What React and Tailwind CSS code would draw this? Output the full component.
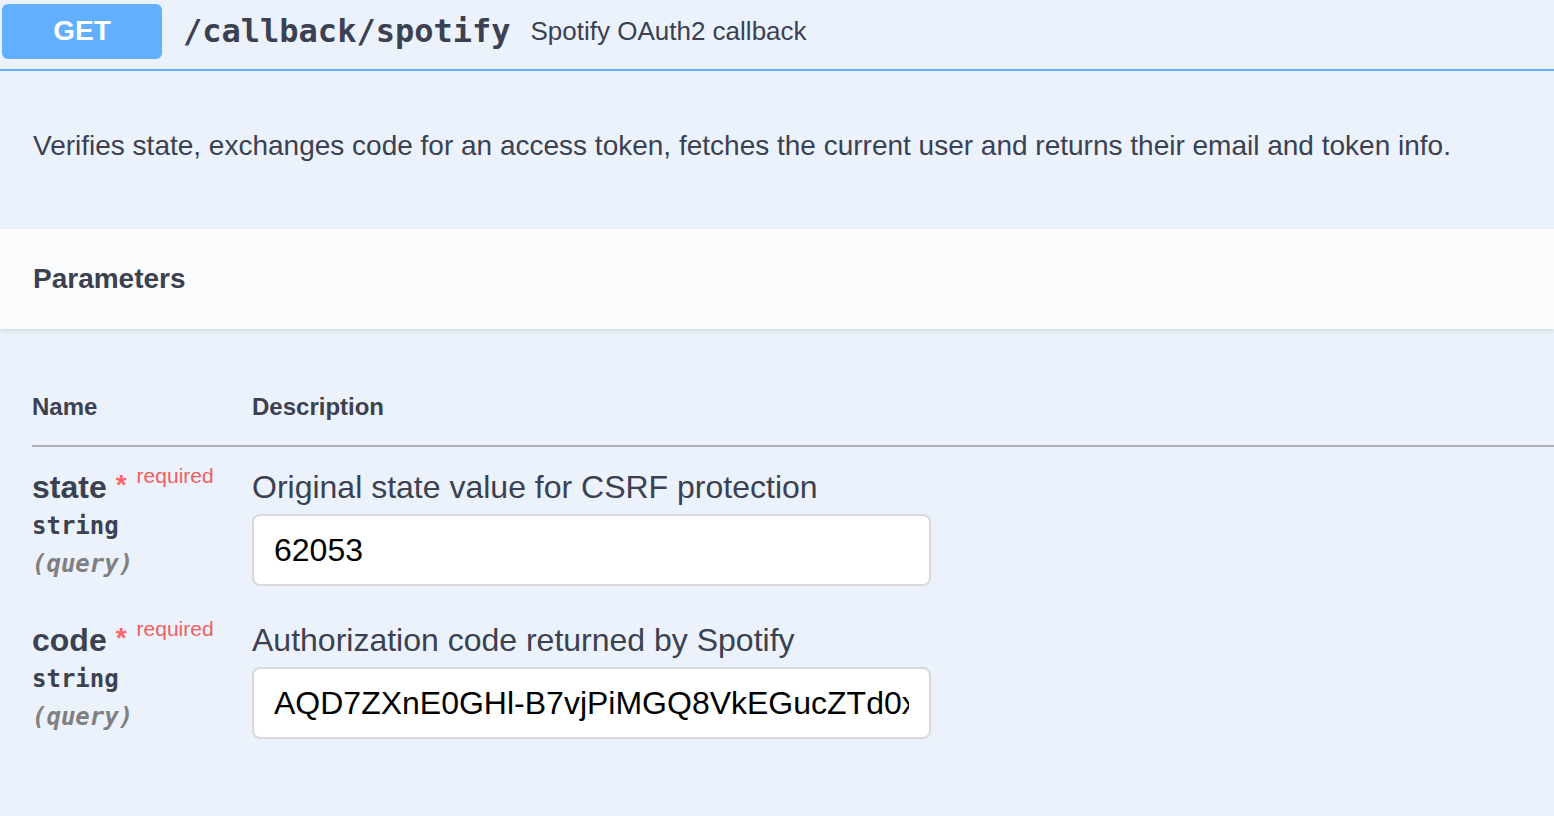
import React from "react";

const sans = { fontFamily: '"Liberation Sans", Arial, sans-serif' };
const mono = { fontFamily: '"DejaVu Sans Mono", "Liberation Mono", monospace' };

const params = [
  {
    name: "state",
    type: "string",
    loc: "(query)",
    desc: "Original state value for CSRF protection",
    value: "62053",
  },
  {
    name: "code",
    type: "string",
    loc: "(query)",
    desc: "Authorization code returned by Spotify",
    value: "AQD7ZXnE0GHl-B7vjPiMGQ8VkEGucZTd0xWqLm3kPz",
  },
];

function ParamRow({ p }) {
  return (
    <div className="flex pt-[22px] pb-[14px]">
      <div className="w-[220px] shrink-0">
        <div className="flex items-start h-[36px]">
          <span className="text-[32px] font-bold leading-[36px] text-[#3b4151]">{p.name}</span>
          <span className="text-[28px] font-bold text-[#f66] ml-[9px] leading-[28px] mt-[2px]">*</span>
          <span className="text-[21px] text-[#f15e5e] ml-[10px] leading-[22px] -mt-[4px]">required</span>
        </div>
        <div className="text-[24px] font-bold text-[#3b4151] leading-[38px] mt-[2px]" style={mono}>
          {p.type}
        </div>
        <div className="text-[24px] italic font-bold text-[#808080] leading-[38px]" style={mono}>
          {p.loc}
        </div>
      </div>
      <div className="flex-1">
        <div className="text-[32px] leading-[36px] text-[#3b4151]">{p.desc}</div>
        <input
          readOnly
          value={p.value}
          className="block mt-[9px] w-[679px] h-[72px] bg-white border-2 border-[#d9d9d9] rounded-[8px] px-[20px] text-[32px] text-black outline-none"
          style={sans}
        />
      </div>
    </div>
  );
}

export default function App() {
  return (
    <div className="w-[1554px] h-[816px] overflow-hidden bg-[#ebf2fb]" style={sans}>
      {/* summary bar */}
      <div className="h-[71px] flex items-center border-b-2 border-[#61affe] pl-[2px] pb-[10px] pt-[3px]">
        <div className="w-[160px] h-[55px] rounded-[6px] bg-[#61affe] flex items-center justify-center text-white text-[28px] font-bold">
          GET
        </div>
        <span className="ml-[21px] text-[32px] font-bold text-[#3b4151]" style={mono}>
          /callback/spotify
        </span>
        <span className="ml-[20px] text-[26px] text-[#3b4151]">Spotify OAuth2 callback</span>
      </div>

      {/* description */}
      <div className="h-[158px] flex items-center px-[33px] pb-[8px]">
        <p className="text-[28px] text-[#3b4151]">
          Verifies state, exchanges code for an access token, fetches the current user and returns their email and token info.
        </p>
      </div>

      {/* parameters header */}
      <div className="h-[100px] bg-[#fbfcfe] shadow-[0_2px_4px_rgba(0,0,0,0.1)] flex items-center px-[33px]">
        <h4 className="text-[28px] font-bold text-[#3b4151]">Parameters</h4>
      </div>

      {/* table */}
      <div className="pl-[32px] pt-[58px]">
        <div className="flex border-b-2 border-[#aeb1b9] pb-[18px]">
          <div className="w-[220px] text-[24px] font-bold text-[#3b4151] leading-[40px]">Name</div>
          <div className="text-[24px] font-bold text-[#3b4151] leading-[40px]">Description</div>
        </div>
        {params.map((p) => (
          <ParamRow key={p.name} p={p} />
        ))}
      </div>
    </div>
  );
}
